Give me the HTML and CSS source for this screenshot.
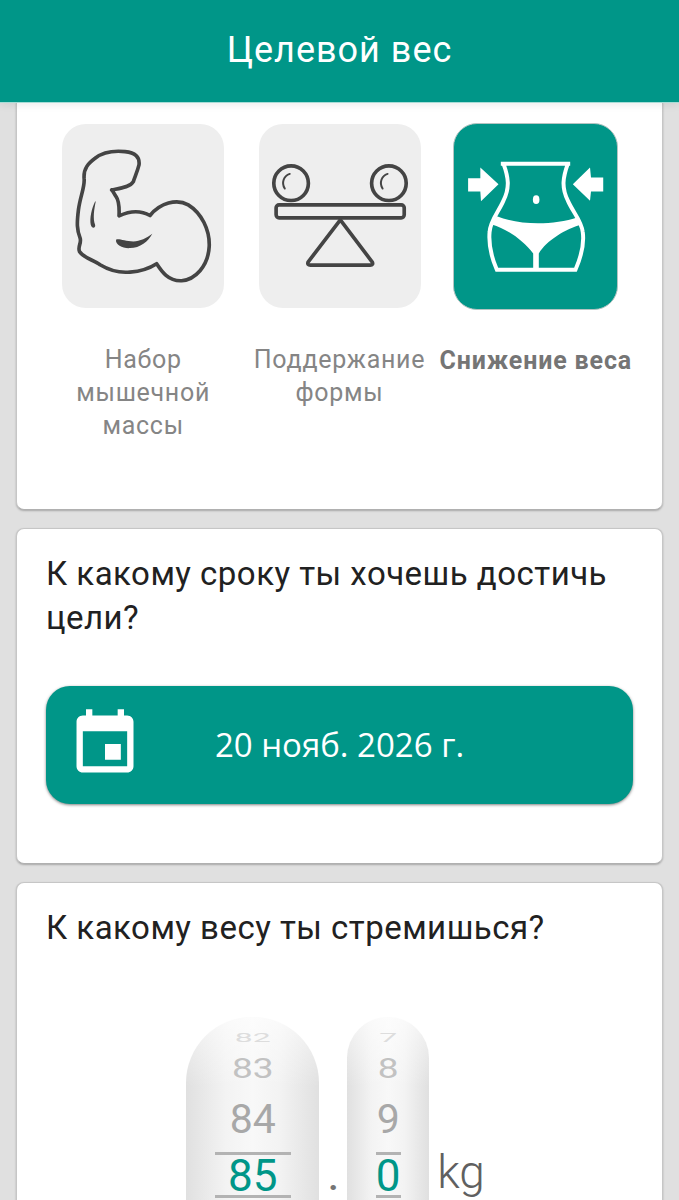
FILE: index.html
```html
<!DOCTYPE html>
<html lang="ru">
<head>
<meta charset="utf-8">
<title>Целевой вес</title>
<link rel="stylesheet" href="styles.css">
</head>
<body>
<header class="app-bar">Целевой вес</header>
<main class="content">
  <section class="card goals">
    <div class="goal">
      <div class="tile">
        <svg class="tile-icon" viewBox="66 72 486 553">
          <path class="line" d="M215 270C240 265 270 262 280 245C285 230 292 215 297 195C300 170 285 158 255 155C225 152 190 155 165 175C145 190 130 205 132 235C135 260 120 290 115 330C110 370 110 390 120 415C125 430 112 440 118 455C130 475 160 480 180 495C205 510 240 520 270 517C300 515 330 505 350 492C365 515 385 545 425 543C465 540 505 500 508 440C510 390 485 340 445 315C410 295 360 310 330 347C300 330 265 335 237 348C238 325 235 300 228 290C222 282 220 275 215 270Z"/>
          <path class="solid" d="M165 305C155 325 148 355 152 375C155 388 168 385 165 375C158 355 162 330 167 305Z"/>
          <path class="solid" d="M228 420C235 415 255 425 280 425C300 425 320 415 337 402C325 425 300 445 270 445C250 447 225 435 228 420Z"/>
        </svg>
      </div>
      <p class="goal-label">Набор мышечной массы</p>
    </div>
    <div class="goal">
      <div class="tile">
        <svg class="tile-icon" viewBox="656 72 486 553">
          <circle class="line" cx="752" cy="250" r="52"/>
          <circle class="line" cx="1046" cy="250" r="52"/>
          <path class="thin" d="M748 222C730 228 722 248 733 266"/>
          <path class="thin" d="M1042 222C1024 228 1016 248 1027 266"/>
          <rect class="line" x="707" y="315" width="385" height="39" rx="9"/>
          <path class="line" d="M900 360L803 487Q800 496 810 496H990Q1000 496 996 487Z"/>
        </svg>
      </div>
      <p class="goal-label">Поддержание формы</p>
    </div>
    <div class="goal">
      <div class="tile tile-active">
        <svg class="tile-icon" viewBox="41 68 492 560">
          <path class="waist" d="M182 188H392M190 188C205 230 210 260 190 300C175 335 150 360 148 395C145 430 155 475 170 509H408C425 470 435 430 430 395C426 360 400 335 385 300C365 260 370 230 385 188"/>
          <path class="waist-fill" d="M155 372L170 347C240 375 340 375 415 350L425 372C380 385 320 420 297 460V505H280V460C250 420 200 385 155 372Z"/>
          <polygon class="waist-fill" points="83,232 120,232 120,200 175,250 122,302 120,272 83,272"/>
          <polygon class="waist-fill" points="492,230 455,230 452,200 400,250 452,300 455,272 492,272"/>
          <ellipse class="waist-fill" cx="289" cy="297" rx="10" ry="13"/>
        </svg>
      </div>
      <p class="goal-label goal-label-active">Снижение веса</p>
    </div>
  </section>

  <section class="card deadline">
    <h2 class="question">К какому сроку ты хочешь достичь цели?</h2>
    <button class="date-button" type="button">
      <svg class="date-icon" viewBox="0 0 24 24"><path d="M17 12h-5v5h5v-5zM16 1v2H8V1H6v2H5c-1.11 0-1.99.9-1.99 2L3 19c0 1.1.89 2 2 2h14c1.1 0 2-.9 2-2V5c0-1.1-.9-2-2-2h-1V1h-2zm3 18H5V8h14v11z"/></svg>
      <span class="date-text">20 нояб. 2026 г.</span>
    </button>
  </section>

  <section class="card target">
    <h2 class="question">К какому весу ты стремишься?</h2>
    <div class="picker">
      <div class="wheel wheel-wide">
        <div class="num num-far">82</div>
        <div class="num num-mid">83</div>
        <div class="num num-near">84</div>
        <div class="num num-current"><span>85</span></div>
      </div>
      <div class="dot">.</div>
      <div class="wheel wheel-narrow">
        <div class="num num-far">7</div>
        <div class="num num-mid">8</div>
        <div class="num num-near">9</div>
        <div class="num num-current"><span>0</span></div>
      </div>
      <div class="unit">kg</div>
    </div>
  </section>
</main>
</body>
</html>
```
FILE: styles.css
```css
* { box-sizing: border-box; }
html, body { margin: 0; height: 1200px; overflow: hidden; }
body { background: #e0e0e0; font-family: Roboto, "Noto Sans", sans-serif; color: #212121; }

.app-bar {
  position: relative;
  z-index: 2;
  height: 102px;
  background: #009688;
  color: #fff;
  font-size: 36px;
  letter-spacing: 1px;
  line-height: 100px;
  text-align: center;
  box-shadow: 0 1px 0 #a8dcd6, 0 3px 8px rgba(0, 0, 0, .08);
}

.content { padding: 0 16px; display: flex; flex-direction: column; gap: 18px; }

.card {
  background: #fff;
  border: 1px solid #c6c6c6;
  border-bottom-color: #b0b0b0;
  border-radius: 8px;
  box-shadow: 0 1px 2px rgba(0, 0, 0, .25);
}

.goals {
  height: 408px;
  padding: 21px 28px 0;
  display: grid;
  grid-template-columns: repeat(3, 1fr);
  align-items: start;
  border-top: 0;
  border-radius: 0 0 8px 8px;
}
.goal { display: flex; flex-direction: column; align-items: center; }
.tile {
  width: 162px;
  height: 184px;
  background: #eee;
  border-radius: 24px;
  margin-top: 1px;
}
.goal:nth-child(2) .tile { margin-left: 1px; }
.tile-active {
  width: 165px;
  height: 187px;
  margin-top: 0;
  background: #009688;
  border: 1px solid #b4c4c2;
}
.tile-icon { display: block; width: 100%; height: 100%; }
.line { fill: none; stroke: #444; stroke-width: 11; stroke-linejoin: round; }
.thin { fill: none; stroke: #444; stroke-width: 6; stroke-linecap: round; }
.solid { fill: #444; }
.waist { fill: none; stroke: #fff; stroke-width: 12; }
.waist-fill { fill: #fff; }
.goal-label {
  margin: 35px 0 0;
  font-size: 25px;
  letter-spacing: .7px;
  line-height: 33px;
  text-align: center;
  color: #858585;
}
.goal:nth-child(1) .goal-label { width: 150px; }
.goal:nth-child(2) .goal-label { width: 190px; }
.goal:nth-child(3) .goal-label { white-space: nowrap; margin-top: 34px; }
.goal-label-active { font-weight: 700; letter-spacing: .85px; color: #757575; }

.deadline { height: 336px; padding: 23px 29px 0; }
.question {
  margin: 0;
  font-size: 33px;
  letter-spacing: .48px;
  line-height: 44px;
  font-weight: 400;
  color: #212121;
}
.date-button {
  display: flex;
  align-items: center;
  position: relative;
  width: 587px;
  height: 118px;
  margin-top: 46px;
  padding: 0 0 0 21px;
  background: #009688;
  border: 0;
  border-radius: 24px;
  box-shadow: 0 1px 3px rgba(0, 0, 0, .5);
  color: #fff;
  font: inherit;
}
.date-icon { width: 76px; height: 76px; fill: #fff; display: block; margin-top: -3px; }
.date-text {
  flex: 1;
  margin: -2px 0 0 21px;
  padding-right: 118px;
  text-align: center;
  font-family: "Open Sans", Roboto, sans-serif;
  font-size: 33px;
}

.target { height: 400px; padding: 23px 29px 0; }
.picker {
  display: flex;
  align-items: flex-start;
  justify-content: center;
  margin-top: 67px;
  padding-right: 8px;
}
.wheel {
  height: 300px;
  padding-top: 10px;
  display: flex;
  flex-direction: column;
  align-items: center;
  border-radius: 66px 66px 0 0;
  background:
    linear-gradient(to bottom, rgba(255, 255, 255, .6), rgba(255, 255, 255, 0) 70px),
    linear-gradient(to right, #e0e0e0, #f3f3f3 30%, #f8f8f8 50%, #f3f3f3 70%, #e0e0e0);
}
.wheel-wide { width: 133px; }
.wheel-narrow { width: 82px; border-radius: 41px 41px 0 0; }
.num { text-align: center; line-height: 1; width: 100%; }
.num-far { height: 20px; line-height: 20px; font-size: 32px; color: #ddd; transform: scaleY(.42); }
.num-mid { height: 44px; line-height: 44px; font-size: 37px; color: #c2c2c2; transform: scaleY(.75); }
.num-near { height: 54px; line-height: 54px; font-size: 41px; color: #a8a8a8; margin-top: 1px; }
.num-current { margin-top: 6px; font-size: 44px; color: #009688; }
.num-current span {
  display: inline-block;
  min-width: 25px;
  height: 46px;
  line-height: 42px;
  border-top: 3px solid #b3b3b3;
  border-bottom: 3px solid #b3b3b3;
}
.wheel-wide .num-current span { width: 76px; }
.dot {
  width: 28px;
  margin-top: 143px;
  font-size: 30px;
  font-weight: 900;
  line-height: 40px;
  text-align: center;
  color: #757575;
}
.unit {
  margin: 130px 0 0 8px;
  font-size: 46px;
  font-weight: 300;
  line-height: 50px;
  color: #606060;
}
```
